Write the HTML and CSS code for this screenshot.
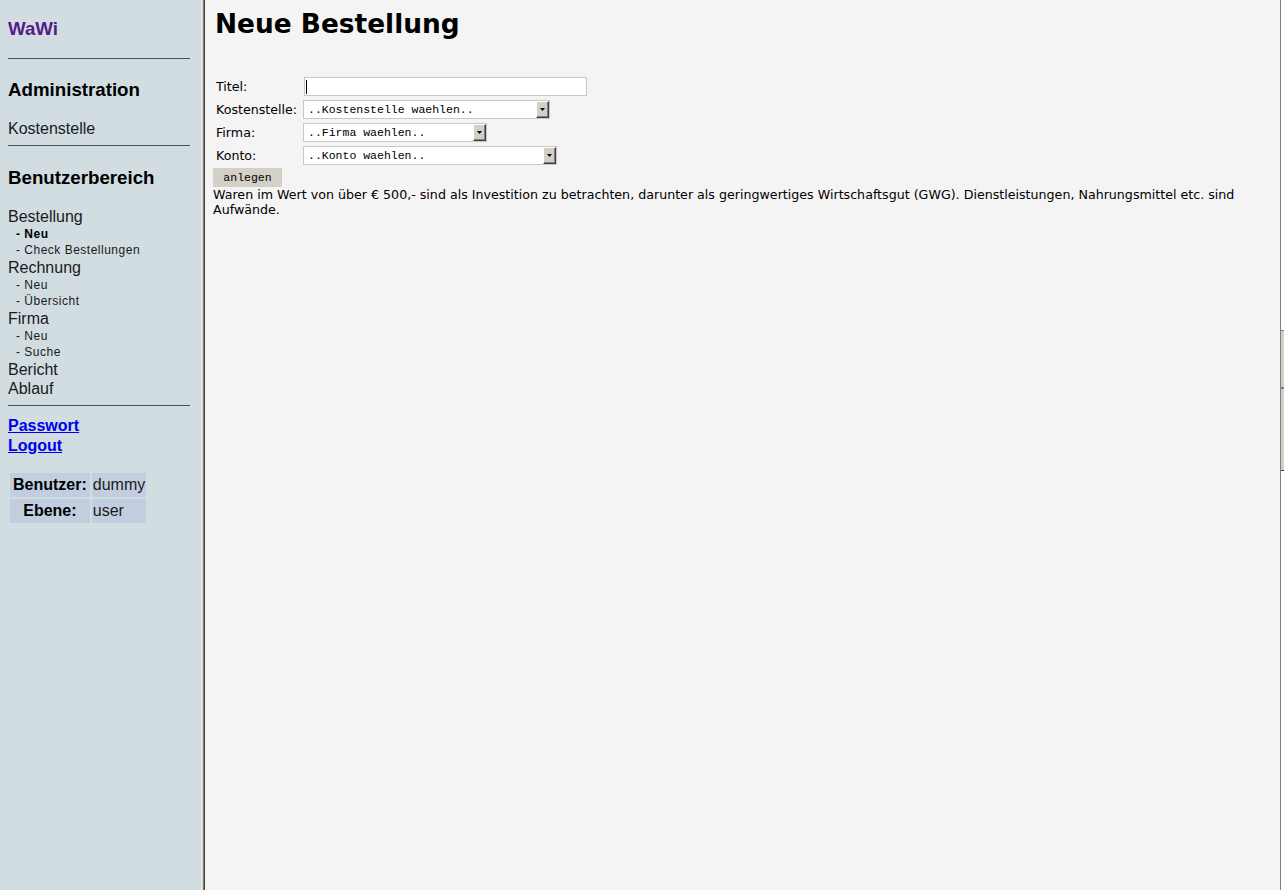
FILE: index.html
```html
<!DOCTYPE html>
<html lang="de">
<head>
<meta charset="utf-8">
<title>WaWi - Neue Bestellung</title>
<link rel="stylesheet" href="styles.css">
</head>
<body>
<div class="frameset">
  <nav class="sidebar">
    <a class="brand" href="#">WaWi</a>
    <hr class="rule rule-top">
    <h3 class="section section-admin">Administration</h3>
    <a class="item item-admin" href="#">Kostenstelle</a>
    <hr class="rule rule-mid">
    <h3 class="section section-user">Benutzerbereich</h3>
    <div class="menu">
      <a class="item" href="#">Bestellung</a>
      <a class="sub active" href="#">- Neu</a>
      <a class="sub" href="#">- Check Bestellungen</a>
      <a class="item" href="#">Rechnung</a>
      <a class="sub" href="#">- Neu</a>
      <a class="sub" href="#">- Übersicht</a>
      <a class="item" href="#">Firma</a>
      <a class="sub" href="#">- Neu</a>
      <a class="sub" href="#">- Suche</a>
      <a class="item" href="#">Bericht</a>
      <a class="item" href="#">Ablauf</a>
    </div>
    <hr class="rule rule-bottom">
    <a class="acct acct-first" href="#">Passwort</a>
    <a class="acct" href="#">Logout</a>
    <table class="userinfo">
      <tr><th>Benutzer:</th><td>dummy</td></tr>
      <tr><th>Ebene:</th><td>user</td></tr>
    </table>
  </nav>
  <div class="frame-border"></div>
  <main class="content">
    <h1 class="title">Neue Bestellung</h1>
    <form class="order">
      <table class="fields">
        <tr>
          <td class="label">Titel:</td>
          <td><div class="textbox"><span class="caret"></span></div></td>
        </tr>
        <tr>
          <td class="label">Kostenstelle:</td>
          <td><div class="select select-kst"><span class="option">..Kostenstelle waehlen..</span><span class="arrow"><svg width="5" height="3" viewBox="0 0 5 3"><polygon points="0,0 5,0 2.5,3" fill="#000"/></svg></span></div></td>
        </tr>
        <tr>
          <td class="label">Firma:</td>
          <td><div class="select select-firma"><span class="option">..Firma waehlen..</span><span class="arrow"><svg width="5" height="3" viewBox="0 0 5 3"><polygon points="0,0 5,0 2.5,3" fill="#000"/></svg></span></div></td>
        </tr>
        <tr>
          <td class="label">Konto:</td>
          <td><div class="select select-konto"><span class="option">..Konto waehlen..</span><span class="arrow"><svg width="5" height="3" viewBox="0 0 5 3"><polygon points="0,0 5,0 2.5,3" fill="#000"/></svg></span></div></td>
        </tr>
      </table>
      <button type="button" class="submit">anlegen</button>
    </form>
    <p class="note">Waren im Wert von über € 500,- sind als Investition zu betrachten, darunter als geringwertiges Wirtschaftsgut (GWG). Dienstleistungen, Nahrungsmittel etc. sind Aufwände.</p>
  </main>
  <div class="edge">
    <div class="edge-top"></div>
    <div class="edge-thumb"></div>
    <div class="edge-track"></div>
    <div class="edge-rest"></div>
  </div>
</div>
</body>
</html>
```

FILE: styles.css
```css
html, body {
  margin: 0;
  padding: 0;
  height: 100%;
}

.frameset {
  display: flex;
  height: 890px;
  width: 1284px;
  overflow: hidden;
}

/* ---------- sidebar ---------- */
.sidebar {
  width: 201px;
  flex: none;
  box-sizing: border-box;
  padding: 0 11px 0 8px;
  background: #d1dde1;
  display: flex;
  flex-direction: column;
  align-items: flex-start;
  font-family: "Liberation Sans", Arial, sans-serif;
  color: #1a1a1a;
}

.brand {
  margin-top: 18px;
  font-size: 18.72px;
  font-weight: bold;
  line-height: 22px;
  color: #551a8b;
  text-decoration: none;
}

.rule {
  align-self: stretch;
  border: 0;
  border-top: 1px solid #505050;
  height: 0;
  margin: 0;
}

.rule-top { margin-top: 18px; }
.rule-mid { margin-top: 7px; }
.rule-bottom { margin-top: 7px; }

.section {
  margin: 0;
  font-size: 18.72px;
  font-weight: bold;
  line-height: 22px;
  color: #000;
}

.section-admin { margin-top: 20px; }
.section-user { margin-top: 21px; }

.item {
  display: block;
  font-size: 16px;
  line-height: 19px;
  color: #1a1a1a;
  text-decoration: none;
}

.item-admin { margin-top: 18px; }

.menu {
  margin-top: 18px;
  display: flex;
  flex-direction: column;
}

.sub {
  display: block;
  padding-left: 8px;
  font-size: 12px;
  letter-spacing: 0.5px;
  line-height: 16px;
  color: #1a1a1a;
  text-decoration: none;
}

.sub.active {
  font-weight: bold;
  color: #000;
}

.acct {
  font-size: 16px;
  font-weight: bold;
  line-height: 20px;
  color: #0000ee;
  text-decoration: underline;
}

.acct-first { margin-top: 10px; }

.userinfo {
  margin-top: 15px;
  border-spacing: 2px;
  margin-left: 0;
  font-size: 16px;
}

.userinfo th,
.userinfo td {
  background: #c2cee0;
  line-height: 22px;
  padding: 1px;
}

.userinfo th {
  padding: 1px 3px;
  text-align: center;
  color: #000;
}

.userinfo td {
  text-align: left;
  color: #1a1a1a;
}

/* ---------- frame border ---------- */
.frame-border {
  width: 4px;
  flex: none;
  background: linear-gradient(to right, #ece9e2 0 1px, #d4d0c8 1px 2px, #808080 2px 3px, #404040 3px 4px);
}

/* ---------- main ---------- */
.content {
  flex: 1;
  min-width: 0;
  background: #f4f4f4;
  padding: 0 8px;
  font-family: "DejaVu Sans", Verdana, sans-serif;
  font-size: 12.65px;
  color: #000;
}

.title {
  margin: 9px 0 0 2px;
  font-size: 26.4px;
  line-height: 30px;
  font-weight: bold;
}

.order {
  margin: 35px 0 0;
}

.fields {
  border-spacing: 2px;
  border-collapse: separate;
}

.fields td {
  padding: 1px;
  vertical-align: middle;
  height: 19px;
}

.fields td.label {
  width: 83px;
  white-space: nowrap;
  line-height: 15px;
}

.textbox {
  margin-left: 1px;
  width: 283px;
  height: 19px;
  box-sizing: border-box;
  border: 1px solid #c8c8c8;
  background: #fff;
  display: flex;
  align-items: center;
  padding-left: 1px;
}

.caret {
  width: 1px;
  height: 14px;
  background: #000;
}

.select {
  height: 19px;
  box-sizing: border-box;
  border: 1px solid #c8c8c8;
  background: #fff;
  display: flex;
  align-items: stretch;
}

.select-kst { width: 247px; }
.select-firma { width: 184px; }
.select-konto { width: 254px; }

.option {
  flex: 1;
  padding-left: 4px;
  font-family: "Liberation Mono", "Courier New", monospace;
  font-size: 11.5px;
  line-height: 17px;
  white-space: nowrap;
  overflow: hidden;
}

.arrow {
  width: 13px;
  flex: none;
  box-sizing: border-box;
  background: #d4d0c8;
  border-style: solid;
  border-width: 1px;
  border-color: #ffffff #404040 #404040 #ffffff;
  box-shadow: inset -1px -1px 0 #808080;
  display: flex;
  align-items: center;
  justify-content: center;
}

.submit {
  display: block;
  width: 69px;
  height: 19px;
  margin: 0;
  padding: 0;
  border: 0;
  background: #d4d0c8;
  font-family: "Liberation Mono", "Courier New", monospace;
  font-size: 11.5px;
  color: #000;
}

.note {
  margin: 0;
  line-height: 15px;
}

/* ---------- right window edge ---------- */
.edge {
  width: 4px;
  flex: none;
  box-sizing: border-box;
  border-left: 1px solid #808080;
  display: flex;
  flex-direction: column;
  background: #ffffff;
}

.edge-top {
  height: 330px;
}

.edge-thumb {
  height: 56px;
  border-top: 1px solid #808080;
  background: #d4d0c8;
}

.edge-track {
  height: 81px;
  border-top: 2px solid #808080;
  border-bottom: 1px solid #404040;
  background: #d4d0c8;
}

.edge-rest {
  flex: 1;
}
```
